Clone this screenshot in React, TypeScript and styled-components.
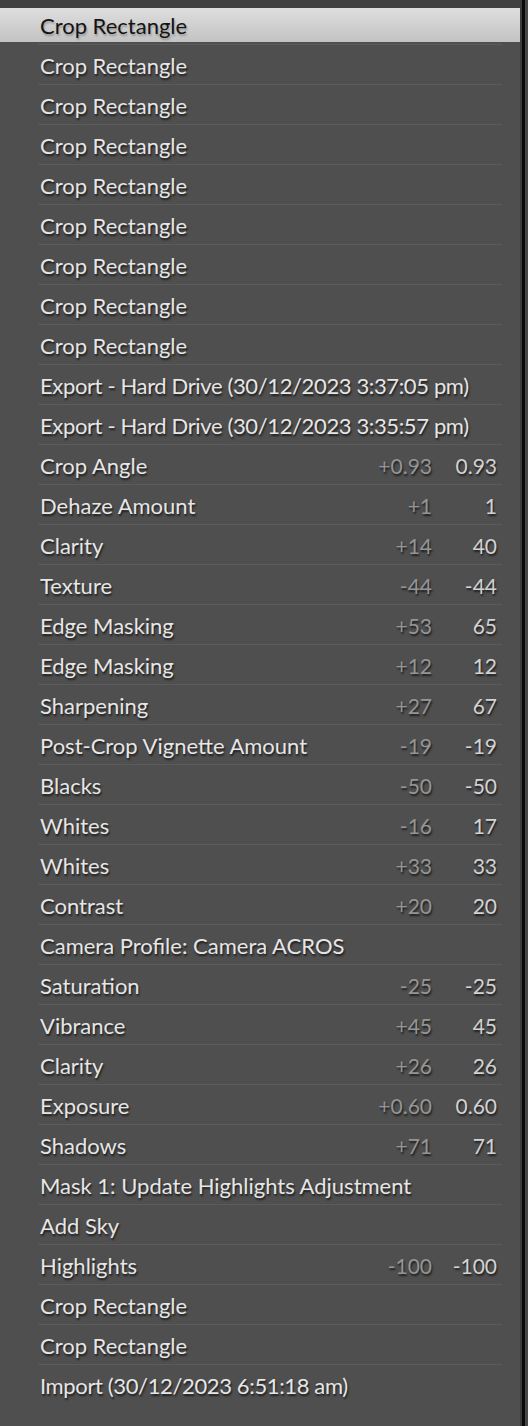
import React from 'react';
import styled, { createGlobalStyle } from 'styled-components';

const GlobalStyle = createGlobalStyle`
  html, body {
    margin: 0;
    padding: 0;
    background: #4f4f4f;
    height: 1426px;
    overflow: hidden;
  }
  * {
    box-sizing: border-box;
  }
`;

const Frame = styled.div`
  display: flex;
  width: 528px;
  height: 1426px;
  background: #4f4f4f;
  font-family: Lato, 'Open Sans', sans-serif;
`;

const Panel = styled.div`
  flex: 1;
  display: flex;
  flex-direction: column;
  border-top: 8px solid #414141;
`;

const Edge = styled.div`
  width: 8px;
  background: linear-gradient(
    to right,
    #3b3b3b 0,
    #3b3b3b 2px,
    #0a0a0a 2px,
    #0a0a0a 5px,
    #484848 5px
  );
`;

const Row = styled.div`
  height: 40px;
  display: flex;
  flex-direction: column;
  &:not(:last-child)::after {
    content: '';
    display: block;
    height: 1px;
    margin: 2px 18px 0 38px;
    background: #5b5b5b;
  }
`;

const Item = styled.div<{ $selected?: boolean }>`
  height: 34px;
  display: flex;
  align-items: center;
  padding: 0 23px 0 40px;
  font-size: 22px;
  color: ${(p) => (p.$selected ? '#141414' : '#e6e6e6')};
  background: ${(p) =>
    p.$selected ? 'linear-gradient(to bottom, #dedede, #c3c3c3)' : 'transparent'};
  text-shadow: ${(p) =>
    p.$selected ? '1px 2px 2px rgba(0, 0, 0, 0.25)' : '1px 2px 2px rgba(0, 0, 0, 0.65)'};
  white-space: nowrap;
`;

const Name = styled.span<{ $dated?: boolean }>`
  flex: 1;
  letter-spacing: ${(p) => (p.$dated ? '-0.37px' : 'normal')};
`;

const Delta = styled.span`
  font-size: 21px;
  color: #959595;
  text-align: right;
`;

const Value = styled.span`
  width: 65px;
  font-size: 21px;
  color: #d2d2d2;
  text-align: right;
`;

type Step = { name: string; delta?: string; value?: string };

const steps: Step[] = [
  { name: 'Crop Rectangle' },
  { name: 'Crop Rectangle' },
  { name: 'Crop Rectangle' },
  { name: 'Crop Rectangle' },
  { name: 'Crop Rectangle' },
  { name: 'Crop Rectangle' },
  { name: 'Crop Rectangle' },
  { name: 'Crop Rectangle' },
  { name: 'Crop Rectangle' },
  { name: 'Export - Hard Drive (30/12/2023 3:37:05 pm)' },
  { name: 'Export - Hard Drive (30/12/2023 3:35:57 pm)' },
  { name: 'Crop Angle', delta: '+0.93', value: '0.93' },
  { name: 'Dehaze Amount', delta: '+1', value: '1' },
  { name: 'Clarity', delta: '+14', value: '40' },
  { name: 'Texture', delta: '-44', value: '-44' },
  { name: 'Edge Masking', delta: '+53', value: '65' },
  { name: 'Edge Masking', delta: '+12', value: '12' },
  { name: 'Sharpening', delta: '+27', value: '67' },
  { name: 'Post-Crop Vignette Amount', delta: '-19', value: '-19' },
  { name: 'Blacks', delta: '-50', value: '-50' },
  { name: 'Whites', delta: '-16', value: '17' },
  { name: 'Whites', delta: '+33', value: '33' },
  { name: 'Contrast', delta: '+20', value: '20' },
  { name: 'Camera Profile: Camera ACROS' },
  { name: 'Saturation', delta: '-25', value: '-25' },
  { name: 'Vibrance', delta: '+45', value: '45' },
  { name: 'Clarity', delta: '+26', value: '26' },
  { name: 'Exposure', delta: '+0.60', value: '0.60' },
  { name: 'Shadows', delta: '+71', value: '71' },
  { name: 'Mask 1: Update Highlights Adjustment' },
  { name: 'Add Sky' },
  { name: 'Highlights', delta: '-100', value: '-100' },
  { name: 'Crop Rectangle' },
  { name: 'Crop Rectangle' },
  { name: 'Import (30/12/2023 6:51:18 am)' },
];

export default function App() {
  return (
    <>
      <GlobalStyle />
      <Frame>
        <Panel>
          {steps.map((s, i) => (
            <Row key={i}>
              <Item $selected={i === 0}>
                <Name $dated={s.name.includes('/')}>{s.name}</Name>
                {s.delta && <Delta>{s.delta}</Delta>}
                {s.value && <Value>{s.value}</Value>}
              </Item>
            </Row>
          ))}
        </Panel>
        <Edge />
      </Frame>
    </>
  );
}
